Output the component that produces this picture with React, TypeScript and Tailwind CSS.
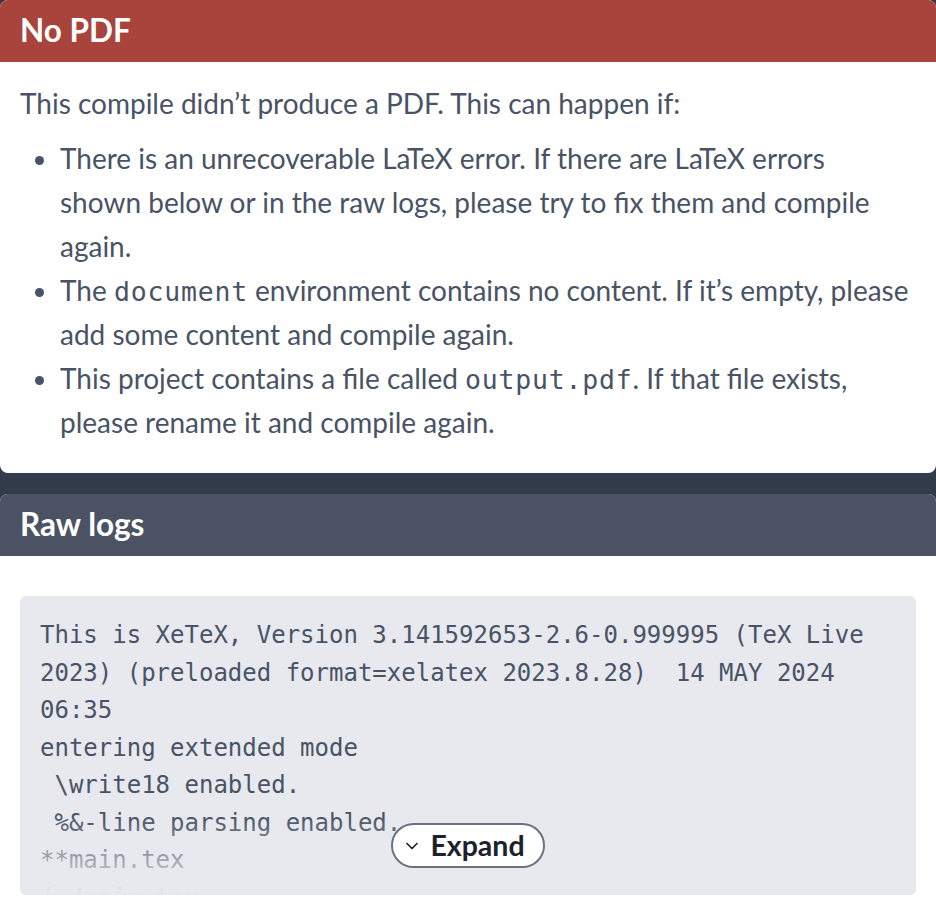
import React from 'react';
import { ChevronDown } from 'lucide-react';

const rawLog = `This is XeTeX, Version 3.141592653-2.6-0.999995 (TeX Live 2023) (preloaded format=xelatex 2023.8.28)  14 MAY 2024 06:35
entering extended mode
 \\write18 enabled.
 %&-line parsing enabled.
**main.tex
(./main.tex
LaTeX2e <2023-11-01> patch level 1`;

const Code: React.FC<{ children: React.ReactNode }> = ({ children }) => (
  <code className="font-['DejaVu_Sans_Mono',monospace] text-[26.5px] leading-none tracking-[0.8px]">{children}</code>
);

export default function App() {
  return (
    <div className="min-h-screen bg-[#323b4a] font-['Lato',sans-serif] text-[#495365]">
      <div className="rounded-lg overflow-hidden bg-white">
        <div className="h-[62px] bg-[#a8443c] px-5 flex items-center text-white text-[31.5px] font-bold">
          No PDF
        </div>
        <div className="pl-5 pr-[26px] pt-[19px] pb-[29px] text-[28px] leading-[44px]">
          <p className="mb-[11px]">This compile didn’t produce a PDF. This can happen if:</p>
          <ul className="list-disc pl-[40px]">
            <li>
              There is an unrecoverable LaTeX error. If there are LaTeX errors shown below or in the raw logs, please try
              to fix them and compile again.
            </li>
            <li>
              The <Code>document</Code> environment contains no content. If it’s empty, please add some content and
              compile again.
            </li>
            <li>
              This project contains a file called <Code>output.pdf</Code>. If that file exists, please rename it and
              compile again.
            </li>
          </ul>
        </div>
      </div>

      <div className="mt-[21px] rounded-t-lg overflow-hidden bg-white">
        <div className="h-[62px] bg-[#4b5263] px-5 flex items-center text-white text-[31.5px] font-bold">
          Raw logs
        </div>
        <div className="px-5 pt-10 pb-6">
          <div className="relative h-[299px] overflow-hidden rounded-md bg-[#e7e9ee]">
            <pre className="px-5 pt-[21px] whitespace-pre-wrap break-words font-['DejaVu_Sans_Mono',monospace] text-[24px] leading-[37.5px] text-[#495365]">
              {rawLog}
            </pre>
            <div className="absolute inset-x-0 bottom-0 h-[78px] bg-gradient-to-b from-[#e7e9ee00] to-[#e7e9ee]" />
            <div className="absolute inset-x-0 bottom-[27px] flex justify-center">
              <button className="flex items-center gap-[8px] h-[45px] pl-[9px] pr-[18px] rounded-full border-2 border-[#6b7280] bg-white text-[#1b222c] text-[28.5px] font-bold">
                <ChevronDown className="w-[20px] h-[20px]" strokeWidth={2} />
                Expand
              </button>
            </div>
          </div>
        </div>
      </div>
    </div>
  );
}
